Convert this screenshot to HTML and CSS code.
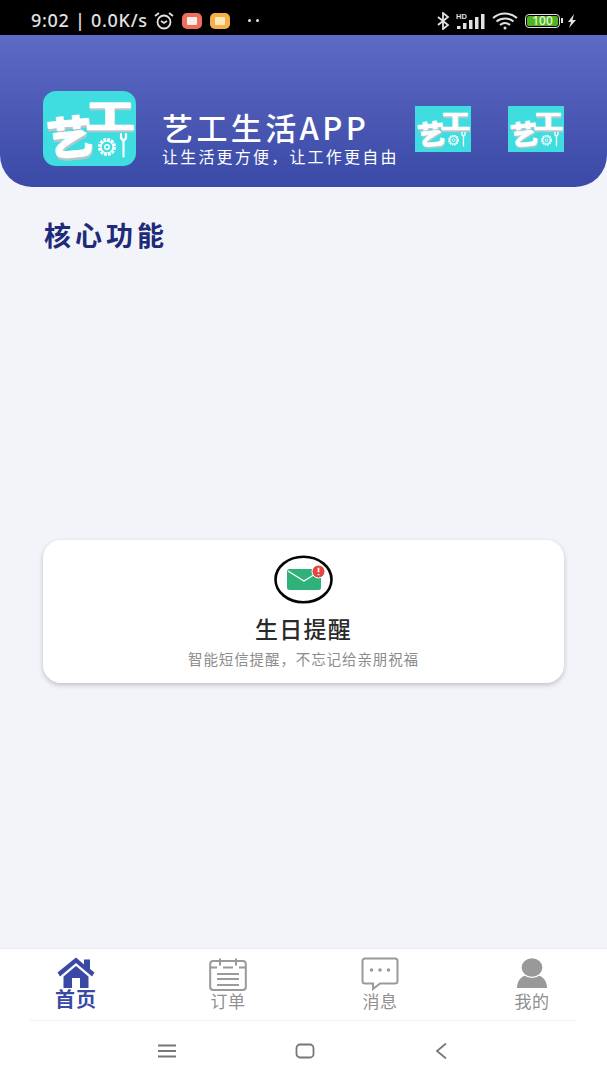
FILE: index.html
```html
<!DOCTYPE html>
<html lang="zh">
<head>
<meta charset="utf-8">
<title>艺工生活APP</title>
<link rel="stylesheet" href="styles.css">
</head>
<body>
<svg class="defs" width="0" height="0" aria-hidden="true">
  <defs>
    <symbol id="logo-art" viewBox="0 0 93 75">
      <g class="logo-glyphs">
        <text class="glyph-shadow" x="4" y="66" font-size="45" transform="rotate(-6 26 46)">艺</text>
        <text class="glyph-face" x="4" y="63.500" font-size="45" transform="rotate(-6 26 46)">艺</text>
        <text class="glyph-shadow" font-size="50" transform="translate(42 40) scale(1 .68)">工</text>
        <text class="glyph-face" font-size="50" transform="translate(42 37.500) scale(1 .68)">工</text>
      </g>
      <g class="logo-tool">
        <circle cx="64" cy="56" r="7.500" fill="none" stroke-width="3" stroke-dasharray="2.800 1.130"/>
        <circle cx="64" cy="56" r="6" fill="none" stroke-width="1.200"/>
        <circle cx="64" cy="56" r="2.300" fill="none" stroke-width="1.400"/>
        <path d="M78 43v4l2.500 3 2.500-3v-4M80.500 50v15.500" fill="none" stroke-width="2.200" stroke-linecap="round"/>
      </g>
    </symbol>
  </defs>
</svg>

<div class="page">
  <div class="status">
    <div class="status-left">
      <span class="status-text">9:02 | 0.0K/s</span>
      <svg class="alarm" viewBox="0 0 22 18"><circle cx="11" cy="10" r="6.500"/><path d="M2 4l4-3M20 4l-4-3M8 9l3 2 3-2"/></svg>
      <span class="app-dot app-red"><i></i></span>
      <span class="app-dot app-yellow"><i></i></span>
      <span class="dots"><i></i><i></i></span>
    </div>
    <div class="status-right">
      <svg class="bt" viewBox="0 0 14 18"><path d="M2 5l10 8-5 4V1l5 4L2 13"/></svg>
      <svg class="signal" viewBox="0 0 30 18">
        <text x="0" y="6.500" class="hd">HD</text>
        <rect x="1" y="14" width="3.500" height="3"/><rect x="7" y="11" width="3.500" height="6"/><rect x="13" y="8" width="3.500" height="9"/><rect x="19" y="5" width="3.500" height="12"/><rect x="25" y="2" width="3.500" height="15"/>
      </svg>
      <svg class="wifi" viewBox="0 0 26 18"><path d="M1 6c7-6 17-6 24 0M4.500 9.500c5-4 12-4 17 0M8 13c3-2.500 7-2.500 10 0"/><circle cx="13" cy="16" r="1.500" class="wifi-dot"/></svg>
      <span class="battery"><span class="battery-fill">100</span></span>
      <svg class="bolt" viewBox="0 0 10 14"><path d="M7 0L1 8h3l-2 6 7-8H5.500z"/></svg>
    </div>
  </div>

  <header class="hero">
    <svg class="logo logo-main"><use href="#logo-art"/></svg>
    <div class="hero-copy">
      <h1 class="hero-title">艺工生活APP</h1>
      <p class="hero-sub">让生活更方便，让工作更自由</p>
    </div>
    <svg class="logo logo-small"><use href="#logo-art"/></svg>
    <svg class="logo logo-small logo-last"><use href="#logo-art"/></svg>
  </header>

  <main class="content">
    <h2 class="section-title">核心功能</h2>
    <section class="card">
      <svg class="card-icon" viewBox="0 0 60 50">
        <ellipse class="ring" cx="29.500" cy="24.500" rx="28" ry="22.800"/>
        <rect class="mail" x="13" y="14" width="34" height="21" rx="2.500"/>
        <path class="mail-flap" d="M14 16l16 10 16-10"/>
        <circle class="badge" cx="44.500" cy="16.500" r="6.500"/>
        <path class="badge-mark" d="M44.500 12.800v4.500M44.500 19v1.200"/>
      </svg>
      <h3 class="card-title">生日提醒</h3>
      <p class="card-desc">智能短信提醒，不忘记给亲朋祝福</p>
    </section>
  </main>

  <footer class="bottom">
    <nav class="tabs">
      <div class="tab tab-active">
        <svg class="tab-icon" viewBox="0 0 38 34"><path class="home" d="M19 0.500L0.500 15.500l2.500 4L19 6l16 13.500 2.500-4L33 12V2.500h-6v5zM19 9L6.500 19.500V31H15V21h8v10h8.500V19.500z"/></svg>
        <span class="tab-label">首页</span>
      </div>
      <div class="tab">
        <svg class="tab-icon" viewBox="0 0 38 34"><g class="line-icon"><rect x="1.200" y="4" width="35.600" height="29" rx="3"/><path d="M1.200 10.500h7M14 10.500h10M30 10.500h6.800M11 1.500v7M27 1.500v7M8 17h22M8 22h22M8 28h22"/></g></svg>
        <span class="tab-label">订单</span>
      </div>
      <div class="tab">
        <svg class="tab-icon" viewBox="0 0 38 34"><path class="line-icon" d="M4 1.500h30a2.500 2.500 0 0 1 2.500 2.500v20a2.500 2.500 0 0 1-2.500 2.500H19l-7 5.500v-5.500H4A2.500 2.500 0 0 1 1.500 24V4A2.500 2.500 0 0 1 4 1.500z"/><circle class="fill-grey" cx="10.500" cy="13" r="1.800"/><circle class="fill-grey" cx="19" cy="13" r="1.800"/><circle class="fill-grey" cx="27.500" cy="13" r="1.800"/></svg>
        <span class="tab-label">消息</span>
      </div>
      <div class="tab">
        <svg class="tab-icon" viewBox="0 0 38 34"><path class="fill-grey" d="M4 31c0-7 4-12 10-13h10c6 1 10 6 10 13z"/><ellipse class="head" cx="19" cy="10.500" rx="11" ry="9.800"/></svg>
        <span class="tab-label">我的</span>
      </div>
    </nav>
    <div class="sysnav">
      <svg class="sys-icon" viewBox="0 0 20 16"><path d="M1 2.500h18M1 8h18M1 13.500h18"/></svg>
      <svg class="sys-icon" viewBox="0 0 20 16"><rect x="1.500" y="1.500" width="17" height="13" rx="3.500"/></svg>
      <svg class="sys-icon" viewBox="0 0 20 16"><path d="M14 0.500L5 8l9 7.500"/></svg>
    </div>
  </footer>
</div>
</body>
</html>
```

FILE: styles.css
```css
* { box-sizing: border-box; }
html, body { margin: 0; padding: 0; }
body { font-family: "Noto Sans CJK SC", "Noto Sans", sans-serif; background: #f2f4f9; }
h1, h2, h3, p { margin: 0; }
.defs { position: absolute; }

.page { width: 607px; height: 1080px; display: flex; flex-direction: column; overflow: hidden; }

/* status bar */
.status { height: 35px; background: #000; color: #e2e2e2; display: flex; justify-content: space-between; align-items: center; padding: 6px 31px 0 31px; flex: none; }
.status-left, .status-right { display: flex; align-items: center; }
.status-text { font-family: "Noto Sans", sans-serif; font-size: 18px; line-height: 20px; letter-spacing: .7px; font-weight: 500; white-space: nowrap; margin-top: -1px; }
.alarm { width: 22px; height: 18px; margin-left: 5px; fill: none; stroke: #e2e2e2; stroke-width: 1.800; }
.app-dot { width: 20px; height: 16px; border-radius: 5px; margin-left: 7px; display: flex; align-items: center; justify-content: center; }
.app-dot i { display: block; width: 10px; height: 8px; border-radius: 1px; }
.app-red { background: #ee6f5c; }
.app-red i { background: #fbeee8; }
.app-yellow { background: #f5b04a; margin-left: 8px; }
.app-yellow i { background: #fde9b8; }
.dots { display: flex; gap: 5px; margin-left: 18px; }
.dots i { width: 3px; height: 3px; border-radius: 50%; background: #e2e2e2; }
.status-right { margin-right: -1px; }
.bt { width: 14px; height: 18px; margin-right: 3px; fill: none; stroke: #e2e2e2; stroke-width: 1.800; }
.signal { width: 30px; height: 18px; margin-left: 3px; fill: #e2e2e2; }
.hd { font-family: "Liberation Sans", sans-serif; font-size: 7.500px; font-weight: 700; }
.wifi { width: 26px; height: 18px; margin-left: 6px; fill: none; stroke: #e2e2e2; stroke-width: 2; }
.wifi-dot { fill: #e2e2e2; stroke: none; }
.battery { width: 35px; height: 14px; margin-left: 7px; border: 1.500px solid #e2e2e2; border-radius: 4px; padding: 1px; display: flex; position: relative; }
.battery::after { content: ""; position: absolute; right: -4px; top: 3px; width: 2px; height: 5px; background: #e2e2e2; }
.battery-fill { flex: 1; background: #4fb31f; border-radius: 2px; color: #eaf6df; font-family: "Noto Sans", sans-serif; font-size: 12px; font-weight: 500; line-height: 9px; text-align: center; }
.bolt { width: 10px; height: 14px; margin-left: 7px; fill: #e2e2e2; }

/* hero */
.hero { height: 152px; flex: none; background: linear-gradient(180deg, #5d6bc4 0%, #3b49a7 100%); border-radius: 0 0 32px 32px; padding: 56px 43px 0; display: flex; align-items: flex-start; }
.logo { display: block; background: #3fdde0; }
.logo-main { width: 93px; height: 75px; border-radius: 13px; flex: none; }
.logo-small { width: 56px; height: 46px; margin-top: 15px; flex: none; }
.logo-last { margin-left: 37px; }
.logo-glyphs text { font-family: "Noto Sans CJK SC", sans-serif; font-weight: 900; }
.glyph-face { fill: #fff; stroke: #fff; stroke-width: .8; }
.glyph-shadow { fill: #b4c6ca; stroke: #b4c6ca; stroke-width: .8; }
.logo-tool { stroke: #fff; }
.hero-copy { margin-left: 26px; width: 253px; color: #fff; padding-top: 18px; }
.hero-title { font-size: 31px; line-height: 36px; font-weight: 500; letter-spacing: 3.400px; white-space: nowrap; }
.hero-sub { font-size: 16px; line-height: 20px; letter-spacing: 2.200px; white-space: nowrap; margin-top: 1px; }

/* content */
.content { flex: 1; padding: 29px 43px 0; }
.section-title { font-size: 27px; line-height: 38px; font-weight: 700; color: #1e2a7a; letter-spacing: 4px; margin-left: 1px; }
.card { height: 143px; margin-top: 286px; background: #fff; border-radius: 18px; box-shadow: 0 2px 5px rgba(60, 60, 70, .28); display: flex; flex-direction: column; align-items: center; padding-top: 15px; }
.card-icon { width: 60px; height: 50px; display: block; }
.ring { fill: #fff; stroke: #050505; stroke-width: 2.600; }
.mail { fill: #2fb27a; }
.mail-flap { fill: none; stroke: #fff; stroke-width: 1.400; }
.badge { fill: #e2483f; stroke: #fff; stroke-width: 1; }
.badge-mark { stroke: #fff; stroke-width: 1.700; fill: none; }
.card-title { font-size: 23px; line-height: 30px; font-weight: 500; color: #2a2a2a; letter-spacing: 1.200px; margin-top: 8px; }
.card-desc { font-size: 14.500px; line-height: 20px; color: #8c8c8c; letter-spacing: .9px; margin-top: 6px; }

/* bottom */
.bottom { height: 132px; flex: none; background: #fff; border-top: 1px solid #ebedf0; }
.tabs { height: 72px; margin: 0 30px; border-bottom: 1px solid #f2f2f2; display: grid; grid-template-columns: 92px 152px 152px 1fr; padding-top: 8px; }
.tab { display: flex; flex-direction: column; align-items: center; color: #8f8f8f; width: 92px; }
.tab + .tab { margin-left: 60px; }
.tab-icon { width: 38px; height: 34px; display: block; }
.tab-label { font-size: 17px; line-height: 22px; letter-spacing: .6px; margin-top: -1px; }
.tab-active { color: #3a48a6; }
.tab-active .tab-label { font-size: 20px; font-weight: 700; letter-spacing: 1px; margin-top: -3px; }
.home { fill: #3a48a6; fill-rule: evenodd; }
.line-icon { fill: none; stroke: #9a9a9a; stroke-width: 2; }
.fill-grey { fill: #999; }
.head { fill: #999; stroke: #fff; stroke-width: 1.200; }
.sysnav { height: 59px; display: flex; justify-content: space-between; padding: 0 155px 0 157px; align-items: center; }
.sys-icon { width: 20px; height: 16px; fill: none; stroke: #777; stroke-width: 1.800; }
```
